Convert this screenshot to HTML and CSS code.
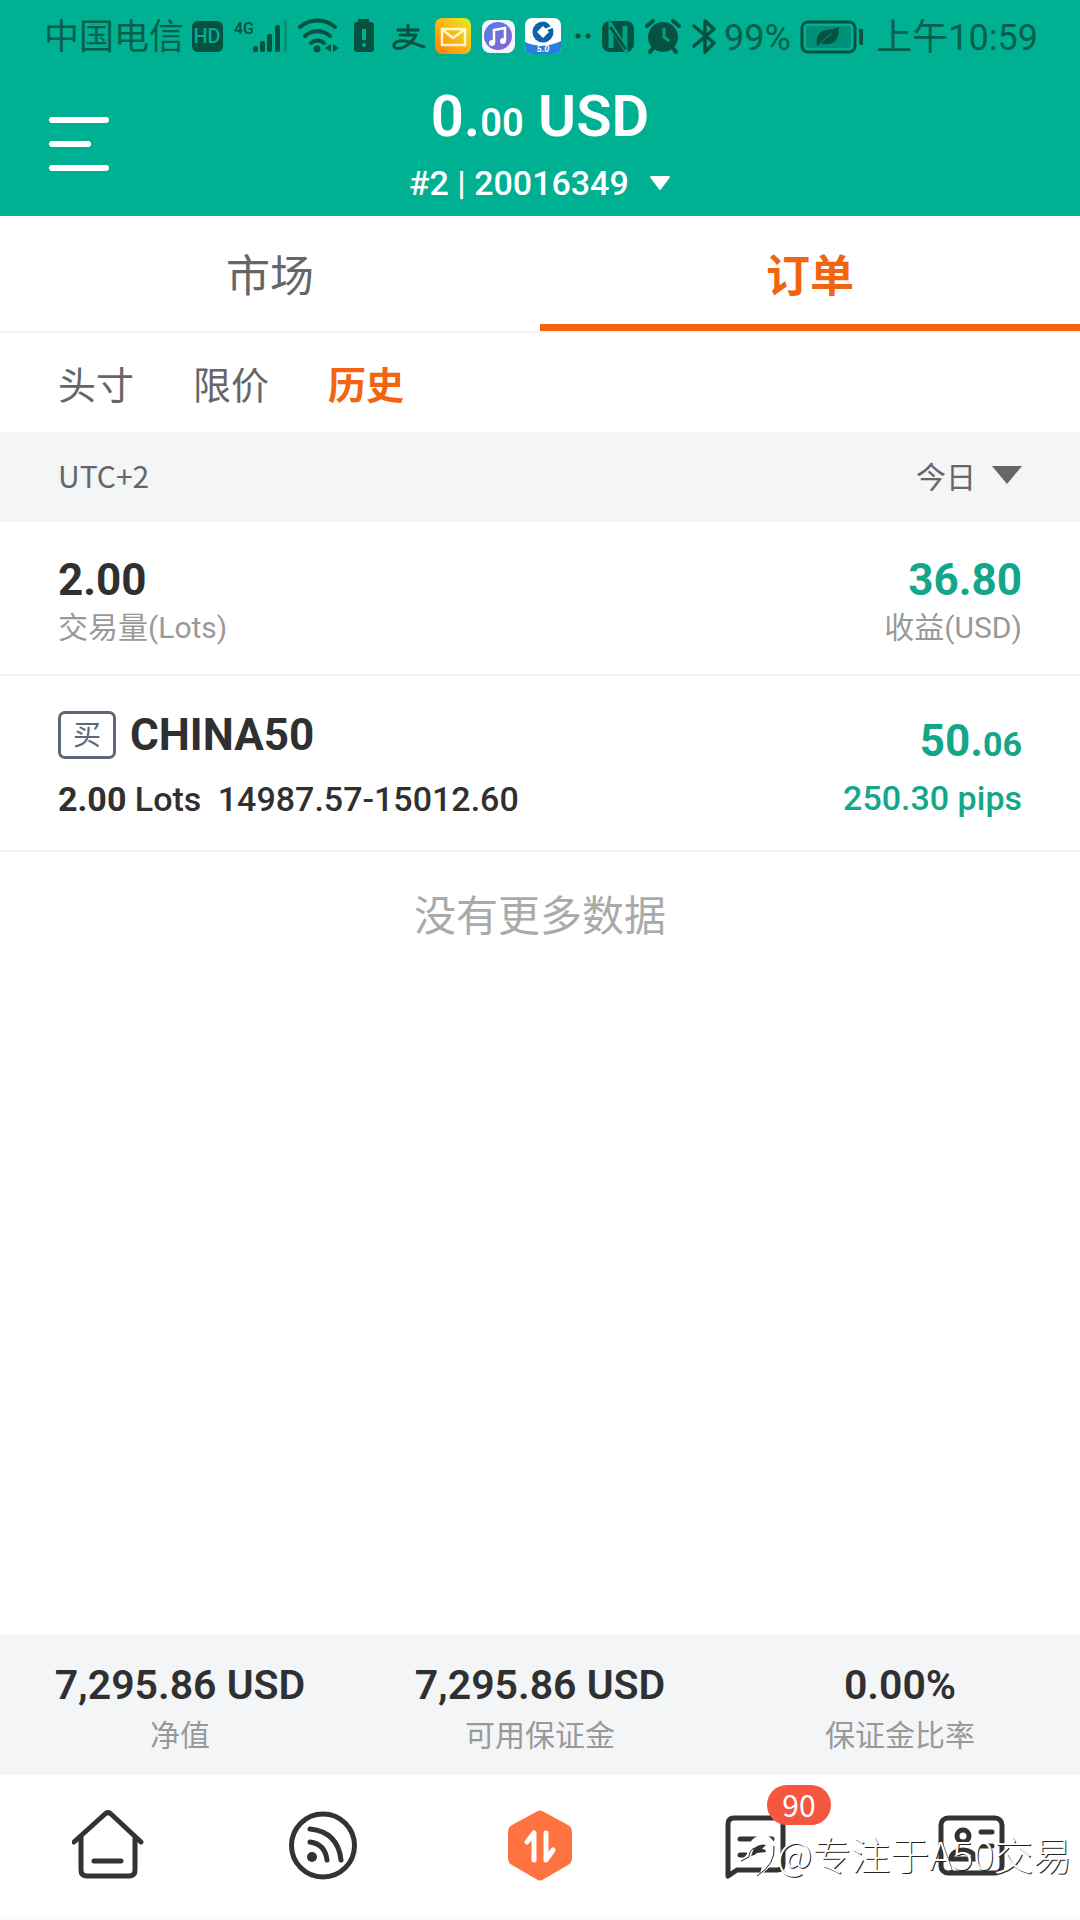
FILE: index.html
```html
<!DOCTYPE html>
<html lang="zh-CN">
<head>
<meta charset="utf-8">
<meta name="viewport" content="width=device-width, initial-scale=1">
<title>订单</title>
<link rel="stylesheet" href="styles.css">
</head>
<body>
<header class="header">
  <div class="status">
    <span class="carrier">中国电信</span>
    <svg class="status-icons" width="378" height="56" viewBox="190 10 378 56" aria-hidden="true">
      <defs>
        <linearGradient id="mail" x1="1" y1="0" x2="0" y2="1"><stop offset="0" stop-color="#d9f022"/><stop offset=".5" stop-color="#ffb515"/><stop offset="1" stop-color="#ff7a10"/></linearGradient>
        <linearGradient id="music" x1="0" y1="0" x2="1" y2="1"><stop offset="0" stop-color="#4f7fe6"/><stop offset="1" stop-color="#8f63cf"/></linearGradient>
      </defs>
      <rect class="ink" x="192" y="21" width="31" height="31" rx="6"/>
      <text class="hd" x="207" y="43" text-anchor="middle">HD</text>
      <text class="g4" x="234" y="34">4G</text>
      <g class="ink">
        <rect x="253" y="46" width="5" height="6" rx="2"/><rect x="260" y="41" width="5" height="11" rx="2"/>
        <rect x="267" y="34" width="5" height="18" rx="2"/><rect x="275" y="25" width="5" height="27" rx="2"/>
        <rect x="284" y="20" width="3" height="32" rx="1" opacity=".3"/>
      </g>
      <g class="line">
        <path d="M300 27a27 27 0 0 1 35 0M305 36a19 19 0 0 1 25 0M311 43a10 10 0 0 1 13 0" stroke-width="4"/>
      </g>
      <circle class="ink" cx="317" cy="49" r="3.5"/>
      <path class="ink" d="M331 44v8l-6-4zM333 44l6 4-6 4z"/>
      <path class="ink" d="M358 19h11v3h2q3 0 3 3v24q0 3-3 3h-14q-3 0-3-3V25q0-3 3-3h1z"/>
      <path d="M364 29v11" stroke="#00b092" stroke-width="4"/><circle cx="364" cy="45" r="2" fill="#00b092"/>
      <path class="line" d="M398 30h20M408 25v9M400 35h16q-4 8-12 12c-6 3-13 1-9-4 5-5 15-1 29 4" stroke-width="3"/>
      <rect x="435" y="18" width="36" height="36" rx="7" fill="url(#mail)"/>
      <path d="M442 29h23v16h-23zM443 30l10 8 11-8" fill="none" stroke="#fff8d0" stroke-width="2.500" stroke-linejoin="round"/>
      <rect x="482" y="20" width="33" height="33" rx="8" fill="#f3f5ff"/>
      <circle cx="498" cy="36" r="14" fill="url(#music)"/>
      <path d="M494 43V30l11-2v12" fill="none" stroke="#fff" stroke-width="2.500"/><circle cx="492" cy="43" r="3" fill="#fff"/><circle cx="503" cy="41" r="3" fill="#fff"/>
      <rect x="525" y="18" width="36" height="36" rx="7" fill="#fff"/>
      <path d="M525 42q18 8 36-1v6q0 7-7 7h-22q-7 0-7-7z" fill="#2a7de0"/>
      <circle cx="543" cy="32" r="10.500" fill="#0963a8"/><path d="M543 26l6 6-6 6-6-6z" fill="#fff"/><path d="M545 30l9-4M546 20l8 8" stroke="#fff" stroke-width="2"/>
      <text class="ccb" x="543" y="52" text-anchor="middle">5.0</text>
    </svg>
    <svg class="status-icons" width="156" height="56" viewBox="568 10 156 56" aria-hidden="true">
      <circle class="ink" cx="578" cy="36" r="2.500"/><circle class="ink" cx="588" cy="36" r="2.500"/>
      <rect class="ink" x="602" y="21" width="32" height="31" rx="8"/>
      <path d="M611 48V26l14 22V26" fill="none" stroke="#00a386" stroke-width="5"/><path class="line" d="M611 28l14 20" stroke-width="3"/>
      <circle class="ink" cx="663" cy="37" r="15"/>
      <path class="line" d="M647 26l6-5M673 21l6 5M653 48l-3 4M673 48l3 4" stroke-width="4"/>
      <path d="M664 28v9l5 4" fill="none" stroke="#00a386" stroke-width="3"/>
      <path class="line" d="M694 26l20 17-9 9V21l9 8-20 17" stroke-width="3.500"/>
    </svg>
    <span>99%</span>
    <svg class="status-icons battery" width="64" height="56" viewBox="799 10 64 56" aria-hidden="true">
      <rect class="line" x="802" y="22" width="53" height="30" rx="6" stroke-width="3"/>
      <rect x="806" y="26" width="45" height="22" rx="3" fill="#009079"/>
      <rect class="ink" x="859" y="29" width="4" height="16" rx="1"/>
      <path class="ink" d="M817 46q-2-14 9-16 7 0 13-3 0 15-9 17-6 1-9-1z"/><path d="M820 43l12-10" stroke="#009079"/>
    </svg>
    <time class="time">上午10:59</time>
  </div>
  <div class="account">
    <button class="menu" type="button" aria-label="菜单">
      <svg width="60" height="54" viewBox="0 0 60 54"><path d="M3 3h54M3 27h36M3 51h54" stroke="#fff" stroke-width="6" stroke-linecap="round"/></svg>
    </button>
    <div class="account-info">
      <h1 class="balance">0.<span class="cents">00</span> USD</h1>
      <label class="picker">
        <select class="account-select" aria-label="账户"><option>#2 | 20016349</option></select>
        <svg width="22" height="14" viewBox="0 0 22 14"><path d="M2 1h18L11 13z" fill="#fff" stroke="#fff" stroke-width="2" stroke-linejoin="round"/></svg>
      </label>
    </div>
  </div>
</header>

<nav class="tabs">
  <a class="tab" href="#market">市场</a>
  <a class="tab tab-active" href="#orders">订单</a>
</nav>
<nav class="subtabs">
  <a class="subtab" href="#positions">头寸</a>
  <a class="subtab" href="#limit">限价</a>
  <a class="subtab subtab-active" href="#history">历史</a>
</nav>
<div class="filter">
  <span>UTC+2</span>
  <label class="picker">
    <select class="date-select" aria-label="日期"><option>今日</option></select>
    <svg width="30" height="18" viewBox="0 0 30 18"><path d="M0 0h30L15 18z" fill="#666"/></svg>
  </label>
</div>

<main class="content">
  <section class="row totals">
    <div><div class="figure">2.00</div><div class="caption">交易量(Lots)</div></div>
    <div class="end"><div class="figure gain">36.80</div><div class="caption">收益(USD)</div></div>
  </section>
  <article class="row order">
    <div>
      <div class="symbol"><span class="side">买</span><h2 class="figure">CHINA50</h2></div>
      <div class="detail"><b>2.00</b> Lots <span class="prices">14987.57-15012.60</span></div>
    </div>
    <div class="end gain">
      <div class="figure profit">50.<span class="figure-small">06</span></div>
      <div class="detail">250.30 pips</div>
    </div>
  </article>
  <p class="empty">没有更多数据</p>
</main>

<section class="summary">
  <div><div class="amount">7,295.86 USD</div><div class="caption">净值</div></div>
  <div><div class="amount">7,295.86 USD</div><div class="caption">可用保证金</div></div>
  <div><div class="amount">0.00%</div><div class="caption">保证金比率</div></div>
</section>

<nav class="bottom">
  <a class="nav-item" href="#home" aria-label="首页">
    <svg class="nav-icon" width="72" height="72" viewBox="72 1810 72 72"><path d="M74 1842l31-28q3-3 6 0l30 28M81 1837v33q0 6 6 6h42q6 0 6-6v-33M94 1861h27"/></svg>
  </a>
  <a class="nav-item" href="#feed" aria-label="动态">
    <svg class="nav-icon" width="72" height="72" viewBox="288 1810 72 72"><circle cx="323" cy="1845.500" r="31.500"/><path d="M310 1829q28 3 31 31M310 1842q15 2 17 18"/><circle class="nav-dot" cx="312" cy="1857" r="5"/></svg>
  </a>
  <a class="nav-item" href="#trade" aria-label="交易">
    <svg class="nav-icon" width="72" height="72" viewBox="0 0 72 72"><path d="M32 2q4-3 8 0l24 13q4 2 4 7v26q0 5-4 7L40 69q-4 3-8 0L8 55q-4-2-4-7V22q0-5 4-7z" fill="#ff7340" stroke="none"/><path d="M23 32l7-9v27M42 23v27l7-10" stroke="#fff"/></svg>
  </a>
  <a class="nav-item" href="#messages" aria-label="消息 90">
    <svg class="nav-icon" width="72" height="72" viewBox="720 1810 72 72"><path d="M728 1876v-52q0-6 6-6h43q6 0 6 6v40q0 6-6 6h-40zM740 1839h32M740 1855h20"/></svg>
    <span class="count">90</span>
  </a>
  <a class="nav-item" href="#profile" aria-label="我的">
    <svg class="nav-icon" width="72" height="72" viewBox="936 1810 72 72"><rect x="941" y="1818" width="61" height="55" rx="7"/><circle cx="963" cy="1836" r="6"/><path d="M951 1859c0-12 24-12 24 0zM981 1832h11M981 1846h11"/></svg>
  </a>
  <div class="watermark">
    <svg width="38" height="50" viewBox="0 0 38 50" aria-hidden="true"><path d="M1 34l7-8Q10 7 25 7q12 2 11 17-1 15-16 24l3-9-5-4-4-2z" fill="#fff"/><path d="M35 18q2 18-17 30M2 33l8-4q0-6 5-9" fill="none" stroke="#222"/><path d="M15 20q6-5 12-3l-4 4q4 0 4 3l-9 1q-3 3-6 3z" fill="#333"/></svg>
    <span>@专注于A50交易</span>
  </div>
</nav>
</body>
</html>
```
FILE: styles.css
```css
* { box-sizing: border-box; }
body {
  margin: 0;
  min-height: 100vh;
  display: flex;
  flex-direction: column;
  background: #fff;
  color: #303030;
  font-family: Roboto, "Noto Sans CJK SC", sans-serif;
}
a { color: inherit; text-decoration: none; }
h1, h2, p { margin: 0; }
svg { display: block; flex: none; }

/* Header */
.header { background: #00b092; color: #fff; height: 216px; }
.status {
  display: flex;
  align-items: center;
  height: 76px;
  padding: 0 42px 0 44px;
  color: #07604c;
  font-size: 36px;
  line-height: 56px;
  white-space: nowrap;
}
.carrier { width: 146px; font-size: 35px; }
.battery { margin-left: 8px; }
.time { margin-left: auto; }
.ink { fill: #04523f; }
.line { fill: none; stroke: #04523f; stroke-linecap: round; stroke-linejoin: round; }
.hd { font: 500 20px Roboto, sans-serif; fill: #00b092; }
.g4 { font: 500 16px Roboto, sans-serif; fill: #04523f; }
.ccb { font: italic 700 9px Roboto, sans-serif; fill: #fff; }
.account { display: grid; grid-template-columns: 120px 1fr 120px; align-items: start; padding: 4px 0; }
.menu { margin: 37px 0 0 49px; padding: 0; border: 0; background: none; width: 60px; }
.account-info { display: flex; flex-direction: column; align-items: center; }
.balance { font-size: 58px; line-height: 72px; font-weight: 600; white-space: nowrap; }
.cents { font-size: 38px; }
.picker { display: flex; align-items: center; gap: 20px; }
select { appearance: none; border: 0; padding: 0; background: none; color: inherit; font: inherit; }
.account-select { font-size: 34px; line-height: 48px; font-weight: 500; }

/* Tabs */
.tabs { display: flex; height: 117px; border-bottom: 2px solid #f2f3f4; color: #666; }
.tab { flex: 1; padding-top: 3px; text-align: center; font-size: 44px; line-height: 116px; height: 115px; }
.tab-active { color: #f26510; font-weight: 700; border-bottom: 7px solid #f26510; }
.subtabs { display: flex; gap: 59px; padding: 0 58px; height: 99px; color: #666; font-size: 38px; line-height: 106px; }
.subtab-active { color: #f26510; font-weight: 700; }
.filter {
  display: flex;
  justify-content: space-between;
  align-items: center;
  height: 90px;
  padding: 0 58px 2px;
  background: #f3f5f7;
  border-bottom: 2px solid #f3f3f3;
  color: #666;
  font: 30px/44px "Noto Sans CJK SC", sans-serif;
}
.filter .picker { gap: 16px; }

/* History */
.content { flex: 1; }
.row { display: flex; justify-content: space-between; padding: 0 58px; border-bottom: 2px solid #f2f2f2; }
.totals { height: 154px; padding-top: 32px; }
.order { height: 176px; padding-top: 33px; }
.end { text-align: right; }
.figure { font-size: 44px; line-height: 52px; font-weight: 700; }
.figure-small { font-size: 34px; }
.gain { color: #13a68a; }
.caption { color: #999; font-size: 30px; line-height: 44px; }
.symbol { display: flex; align-items: center; gap: 14px; height: 52px; }
.side {
  width: 58px;
  height: 48px;
  border: 3px solid #5c677a;
  border-radius: 7px;
  color: #5c677a;
  text-align: center;
  font-size: 28px;
  line-height: 44px;
}
.profit { padding-top: 6px; }
.detail { font-size: 34px; line-height: 48px; padding-top: 14px; font-weight: 500; white-space: nowrap; }
.profit + .detail { padding-top: 4px; }
.prices { padding-left: 8px; }
.empty { color: #aaa; font-size: 42px; line-height: 62px; padding-top: 34px; text-align: center; }

/* Account summary */
.summary {
  display: grid;
  grid-template-columns: repeat(3, 1fr);
  padding: 25px 0;
  height: 140px;
  background: #f3f5f7;
  text-align: center;
}
.amount { font-size: 41px; line-height: 50px; font-weight: 600; }
.summary .caption { padding-top: 4px; }

/* Bottom navigation */
.bottom { position: relative; display: grid; grid-template-columns: repeat(5, 1fr); height: 145px; border-bottom: 4px solid #fafafa; }
.nav-item { position: relative; display: flex; justify-content: center; padding-top: 35px; }
.nav-icon { fill: none; stroke: #333; stroke-width: 5; stroke-linecap: round; stroke-linejoin: round; }
.nav-dot { fill: #333; stroke: none; }
.count {
  position: absolute;
  top: 10px;
  left: 50%;
  margin-left: 11px;
  width: 64px;
  height: 40px;
  border-radius: 20px;
  background: #f55640;
  color: #fff;
  font: 30px/38px "Noto Sans CJK SC", sans-serif;
  text-align: center;
}
.watermark {
  position: absolute;
  right: 8px;
  bottom: 35px;
  display: flex;
  align-items: center;
  color: #fff;
  font: 300 39px/56px "Noto Sans CJK SC", sans-serif;
  text-shadow: 1px 1px 0 #222;
  white-space: nowrap;
}
```
